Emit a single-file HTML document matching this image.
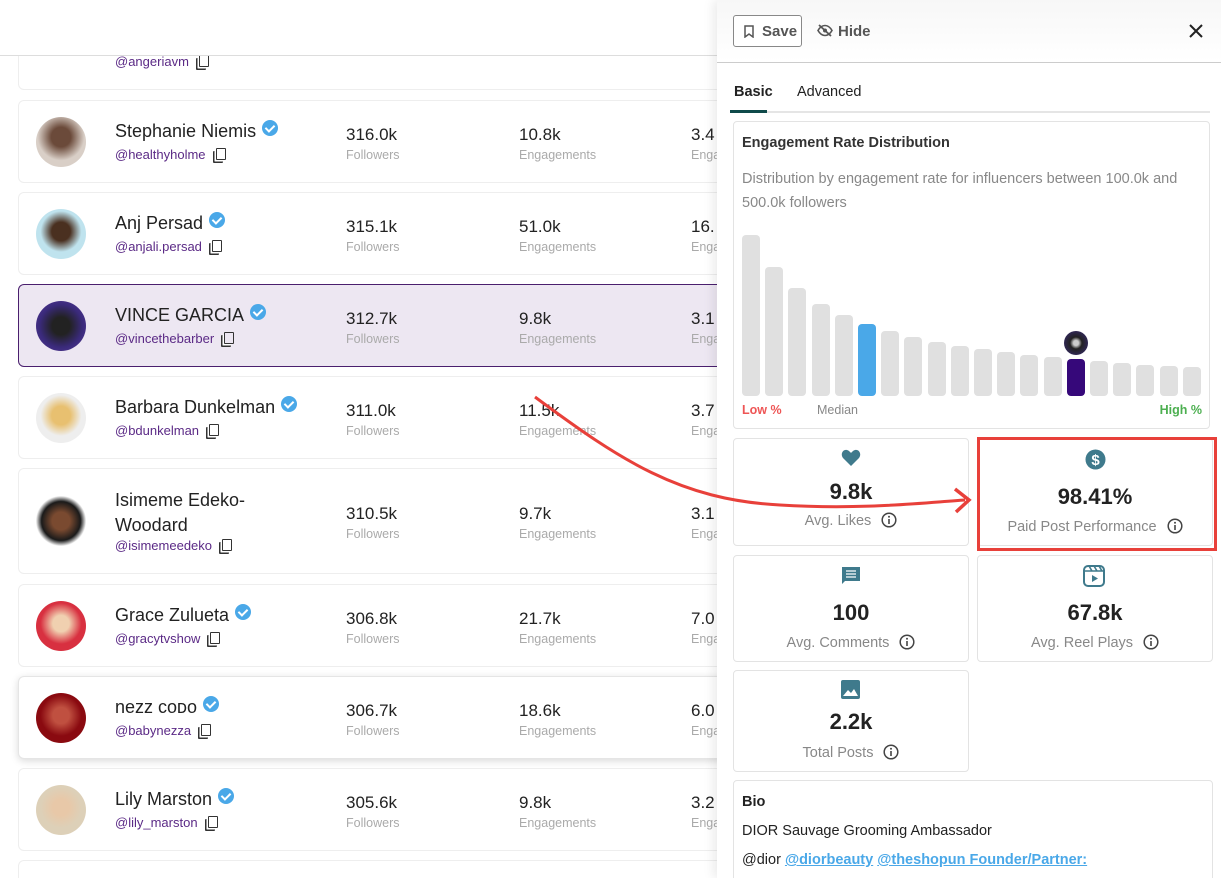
<!DOCTYPE html>
<html><head><meta charset="utf-8"><style>
*{box-sizing:border-box;margin:0;padding:0}
html,body{width:1221px;height:878px;overflow:hidden}
body{background:#fff;font-family:"Liberation Sans",sans-serif;position:relative}
.topbar{position:absolute;left:0;top:0;width:717px;height:56px;border-bottom:1px solid #ddd;background:#fff;z-index:2}
.card{position:absolute;left:18px;width:720px;height:83px;border:1px solid #eee;border-radius:6px;background:#fff}
.card.sel{background:#ede7f2;border-color:#4a1f6e}
.card.sh{box-shadow:0 2px 8px rgba(0,0,0,.15);border-color:#e5e5e5}
.av{position:absolute;left:17px;top:16px;width:50px;height:50px;border-radius:50%}
.nm{position:absolute;left:96px;top:19px;font-size:18px;color:#222}
.hd{position:absolute;left:96px;top:46px;font-size:13px;color:#5b2a86}
.v{position:absolute;top:24px;font-size:17px;color:#222}
.l{position:absolute;top:47px;font-size:12.5px;color:#aaa}
.chk{display:inline-block;width:16px;height:16px;border-radius:50%;background:#4aa8e8;vertical-align:1px;margin-left:6px;position:relative}
.chk:after{content:"";position:absolute;left:5px;top:3px;width:4px;height:7px;border:solid #fff;border-width:0 2px 2px 0;transform:rotate(45deg)}
.cp{display:inline-block;width:10px;height:12px;border:1.5px solid #333;border-radius:1px;margin-left:10px;vertical-align:-1px;box-shadow:-2px 2px 0 -0.5px #fff,-3px 3px 0 0 #333}
.panel{position:absolute;left:717px;top:0;width:504px;height:878px;background:#fff;box-shadow:-4px 0 10px rgba(0,0,0,.08);z-index:3}
.box{position:absolute;border:1px solid #e3e3e3;border-radius:4px;background:#fff}
.st{text-align:center}
.st .n{position:absolute;left:0;right:0;font-size:22px;font-weight:bold;color:#222}
.st .t{position:absolute;left:0;right:0;font-size:14.5px;color:#888}
.i{display:inline-block;width:16px;height:16px;margin-left:10px;vertical-align:-3px}
.bar{position:absolute;width:18px;background:#e0e0e0;border-radius:4px}
</style></head><body>
<svg width="0" height="0" style="position:absolute"><defs><symbol id="inf" viewBox="0 0 16 16"><circle cx="8" cy="8" r="6.8" fill="none" stroke="#444" stroke-width="1.5"/><circle cx="8" cy="4.8" r="1" fill="#444"/><path d="M8 7v5" stroke="#444" stroke-width="1.6"/></symbol></defs></svg>
<div class="topbar"></div>
<div class="card" style="top:-10px;height:100px"><div class="hd" style="top:63px">@angeriavm<span class="cp"></span></div></div>

<div class="card" style="top:100px"><div class="av" style="background:radial-gradient(circle at 50% 40%,#6b4a3a 25%,#d9cfc7 60%)"></div><div class="nm">Stephanie Niemis<span class="chk"></span></div><div class="hd">@healthyholme<span class="cp"></span></div><div class="v" style="left:327px">316.0k</div><div class="l" style="left:327px">Followers</div><div class="v" style="left:500px">10.8k</div><div class="l" style="left:500px">Engagements</div><div class="v" style="left:672px">3.4</div><div class="l" style="left:672px">Enga</div></div>

<div class="card" style="top:192px"><div class="av" style="background:radial-gradient(circle at 50% 45%,#4a3020 25%,#bfe3ee 55%)"></div><div class="nm">Anj Persad<span class="chk"></span></div><div class="hd">@anjali.persad<span class="cp"></span></div><div class="v" style="left:327px">315.1k</div><div class="l" style="left:327px">Followers</div><div class="v" style="left:500px">51.0k</div><div class="l" style="left:500px">Engagements</div><div class="v" style="left:672px">16.</div><div class="l" style="left:672px">Enga</div></div>

<div class="card sel" style="top:284px"><div class="av" style="background:radial-gradient(circle at 50% 50%,#222 25%,#3a2a7a 60%,#5a3aa0)"></div><div class="nm">VINCE GARCIA<span class="chk"></span></div><div class="hd">@vincethebarber<span class="cp"></span></div><div class="v" style="left:327px">312.7k</div><div class="l" style="left:327px">Followers</div><div class="v" style="left:500px">9.8k</div><div class="l" style="left:500px">Engagements</div><div class="v" style="left:672px">3.1</div><div class="l" style="left:672px">Enga</div></div>

<div class="card" style="top:376px"><div class="av" style="background:radial-gradient(circle at 50% 45%,#e8c070 25%,#eee 55%)"></div><div class="nm">Barbara Dunkelman<span class="chk"></span></div><div class="hd">@bdunkelman<span class="cp"></span></div><div class="v" style="left:327px">311.0k</div><div class="l" style="left:327px">Followers</div><div class="v" style="left:500px">11.5k</div><div class="l" style="left:500px">Engagements</div><div class="v" style="left:672px">3.7</div><div class="l" style="left:672px">Enga</div></div>

<div class="card" style="top:468px;height:106px"><div class="av" style="top:27px;background:radial-gradient(circle at 50% 50%,#7a4a30 25%,#1a1a1a 55%,#eee 70%)"></div><div class="nm" style="top:19px;line-height:25px">Isimeme Edeko-<br>Woodard</div><div class="hd" style="top:69px">@isimemeedeko<span class="cp"></span></div><div class="v" style="left:327px;top:35px">310.5k</div><div class="l" style="left:327px;top:58px">Followers</div><div class="v" style="left:500px;top:35px">9.7k</div><div class="l" style="left:500px;top:58px">Engagements</div><div class="v" style="left:672px;top:35px">3.1</div><div class="l" style="left:672px;top:58px">Enga</div></div>

<div class="card" style="top:584px"><div class="av" style="background:radial-gradient(circle at 50% 45%,#f0d0b0 22%,#d83040 55%)"></div><div class="nm">Grace Zulueta<span class="chk"></span></div><div class="hd">@gracytvshow<span class="cp"></span></div><div class="v" style="left:327px">306.8k</div><div class="l" style="left:327px">Followers</div><div class="v" style="left:500px">21.7k</div><div class="l" style="left:500px">Engagements</div><div class="v" style="left:672px">7.0</div><div class="l" style="left:672px">Enga</div></div>

<div class="card sh" style="top:676px"><div class="av" style="background:radial-gradient(circle at 50% 45%,#c05040 22%,#8a0a10 55%)"></div><div class="nm">nezz ᴄᴏᴅᴏ<span class="chk"></span></div><div class="hd">@babynezza<span class="cp"></span></div><div class="v" style="left:327px">306.7k</div><div class="l" style="left:327px">Followers</div><div class="v" style="left:500px">18.6k</div><div class="l" style="left:500px">Engagements</div><div class="v" style="left:672px">6.0</div><div class="l" style="left:672px">Enga</div></div>

<div class="card" style="top:768px"><div class="av" style="background:radial-gradient(circle at 50% 45%,#e8c8a8 22%,#ddd0b8 55%)"></div><div class="nm">Lily Marston<span class="chk"></span></div><div class="hd">@lily_marston<span class="cp"></span></div><div class="v" style="left:327px">305.6k</div><div class="l" style="left:327px">Followers</div><div class="v" style="left:500px">9.8k</div><div class="l" style="left:500px">Engagements</div><div class="v" style="left:672px">3.2</div><div class="l" style="left:672px">Enga</div></div>
<div class="card" style="top:860px;height:18px;border-bottom:none;border-radius:6px 6px 0 0"></div>

<div class="panel">
 <div style="position:absolute;left:0;top:0;width:504px;height:63px;border-bottom:1px solid #ccc;background:linear-gradient(#f7f7f7,#fff)"></div>
 <div style="position:absolute;left:16px;top:15px;width:69px;height:32px;border:1px solid #888;border-radius:3px;font-size:15px;font-weight:bold;color:#555;padding:7px 0 0 28px;background:#fff">Save
  <svg style="position:absolute;left:10px;top:9px" width="10" height="13" viewBox="0 0 10 13"><path d="M1 1h8v11l-4-3-4 3z" fill="none" stroke="#555" stroke-width="1.5"/></svg></div>
 <svg style="position:absolute;left:100px;top:24px" width="16" height="13" viewBox="0 0 16 13"><path d="M1 6.5C3 3 5.5 1.5 8 1.5s5 1.5 7 5c-2 3.5-4.5 5-7 5s-5-1.5-7-5z" fill="none" stroke="#555" stroke-width="1.6"/><circle cx="8" cy="6.5" r="2" fill="#555"/><path d="M2 1l12 11" stroke="#555" stroke-width="1.8"/></svg>
 <div style="position:absolute;left:121px;top:23px;font-size:15px;font-weight:bold;color:#555">Hide</div>
 <svg style="position:absolute;left:471px;top:23px" width="16" height="16"><path d="M2 2l12 12M14 2L2 14" stroke="#222" stroke-width="2"/></svg>
 <div style="position:absolute;left:17px;top:84px;font-size:14.5px;font-weight:bold;color:#222">Basic</div>
 <div style="position:absolute;left:80px;top:84px;font-size:14.5px;color:#222">Advanced</div>
 <div style="position:absolute;left:13px;top:111px;width:480px;height:2px;background:#e5e5e5"></div>
 <div style="position:absolute;left:13px;top:110px;width:37px;height:3px;background:#0f4a4a"></div>
 <div class="box" style="left:16px;top:121px;width:477px;height:308px">
  <div style="position:absolute;left:8px;top:13px;font-size:14.5px;font-weight:bold;color:#333">Engagement Rate Distribution</div>
  <div style="position:absolute;left:8px;top:45px;width:465px;font-size:14.5px;line-height:24px;color:#888">Distribution by engagement rate for influencers between 100.0k and 500.0k followers</div>
  <div style="position:absolute;left:8px;top:281px;font-size:12.5px;font-weight:bold;color:#e55">Low %</div>
  <div style="position:absolute;left:83px;top:281px;font-size:12.5px;color:#888">Median</div>
  <div style="position:absolute;right:7px;top:281px;font-size:12.5px;font-weight:bold;color:#4caf50">High %</div>
 </div>
 <div class="bar" style="left:25px;top:235px;height:161px"></div>
 <div class="bar" style="left:48px;top:267px;height:129px"></div>
 <div class="bar" style="left:71px;top:288px;height:108px"></div>
 <div class="bar" style="left:95px;top:304px;height:92px"></div>
 <div class="bar" style="left:118px;top:315px;height:81px"></div>
 <div class="bar" style="left:141px;top:324px;height:72px;background:#4aa8e8"></div>
 <div class="bar" style="left:164px;top:331px;height:65px"></div>
 <div class="bar" style="left:187px;top:337px;height:59px"></div>
 <div class="bar" style="left:211px;top:342px;height:54px"></div>
 <div class="bar" style="left:234px;top:346px;height:50px"></div>
 <div class="bar" style="left:257px;top:349px;height:47px"></div>
 <div class="bar" style="left:280px;top:352px;height:44px"></div>
 <div class="bar" style="left:303px;top:355px;height:41px"></div>
 <div class="bar" style="left:327px;top:357px;height:39px"></div>
 <div class="bar" style="left:350px;top:359px;height:37px;background:#36087a"></div>
 <div style="position:absolute;left:347px;top:331px;width:24px;height:24px;border-radius:50%;background:radial-gradient(#ccc 15%,#222 35%,#3a2a7a)"></div>
 <div class="bar" style="left:373px;top:361px;height:35px"></div>
 <div class="bar" style="left:396px;top:363px;height:33px"></div>
 <div class="bar" style="left:419px;top:365px;height:31px"></div>
 <div class="bar" style="left:443px;top:366px;height:30px"></div>
 <div class="bar" style="left:466px;top:367px;height:29px"></div>

 <div class="box st" style="left:16px;top:438px;width:236px;height:108px">
  <svg style="position:absolute;left:107px;top:10px" width="20" height="18" viewBox="0 0 20 18"><path d="M10 17L2 9C-1 5 2 0 6 1c2 .5 3 2 4 3 1-1 2-2.5 4-3 4-1 7 4 4 8z" fill="#3f7a8c"/></svg>
  <div class="n" style="top:40px">9.8k</div><div class="t" style="top:73px">Avg. Likes<svg class="i"><use href="#inf"/></svg></div></div>
 <div class="box st" style="left:260px;top:438px;width:236px;height:108px">
  <svg style="position:absolute;left:107px;top:10px" width="21" height="21" viewBox="0 0 21 21"><circle cx="10.5" cy="10.5" r="10" fill="#3f7a8c"/><text x="10.5" y="16" font-size="15" font-weight="bold" fill="#fff" text-anchor="middle" font-family="Liberation Sans">$</text></svg>
  <div class="n" style="top:45px">98.41%</div><div class="t" style="top:79px">Paid Post Performance<svg class="i"><use href="#inf"/></svg></div></div>
 <div style="position:absolute;left:260px;top:437px;width:240px;height:114px;border:3px solid #e8403a"></div>
 <div class="box st" style="left:16px;top:555px;width:236px;height:107px">
  <svg style="position:absolute;left:107px;top:10px" width="20" height="20" viewBox="0 0 20 20"><path d="M1 1h18v14H4l-3 3z" fill="#3f7a8c"/><path d="M5 5h10M5 8h10M5 11h10" stroke="#fff" stroke-width="1.3"/></svg>
  <div class="n" style="top:44px">100</div><div class="t" style="top:78px">Avg. Comments<svg class="i"><use href="#inf"/></svg></div></div>
 <div class="box st" style="left:260px;top:555px;width:236px;height:107px">
  <svg style="position:absolute;left:105px;top:9px" width="22" height="22" viewBox="0 0 22 22"><rect x="1" y="1" width="20" height="20" rx="4" fill="none" stroke="#3f7a8c" stroke-width="2"/><path d="M1 6h20M6 1l3 5M11 1l3 5M16 1l3 5" stroke="#3f7a8c" stroke-width="1.6"/><path d="M9 10v7l6-3.5z" fill="#3f7a8c"/></svg>
  <div class="n" style="top:44px">67.8k</div><div class="t" style="top:78px">Avg. Reel Plays<svg class="i"><use href="#inf"/></svg></div></div>
 <div class="box st" style="left:16px;top:670px;width:236px;height:102px">
  <svg style="position:absolute;left:107px;top:9px" width="19" height="19" viewBox="0 0 19 19"><rect width="19" height="19" rx="2" fill="#3f7a8c"/><path d="M2 16l5-6 3 3 3-4 4 7z" fill="#fff"/></svg>
  <div class="n" style="top:38px">2.2k</div><div class="t" style="top:73px">Total Posts<svg class="i"><use href="#inf"/></svg></div></div>
 <div class="box" style="left:16px;top:780px;width:480px;height:110px">
  <div style="position:absolute;left:8px;top:13px;font-size:14.5px;font-weight:bold;color:#222">Bio</div>
  <div style="position:absolute;left:8px;top:42px;font-size:14.5px;color:#222">DIOR Sauvage Grooming Ambassador</div>
  <div style="position:absolute;left:8px;top:71px;font-size:14.5px;color:#222">@dior <span style="color:#4aa8e8;font-weight:bold;text-decoration:underline">@diorbeauty</span> <span style="color:#4aa8e8;font-weight:bold;text-decoration:underline">@theshopun Founder/Partner:</span></div>
 </div>
</div>
<svg style="position:absolute;left:0;top:0;z-index:5" width="1221" height="878"><path d="M535 397C620 460 680 500 780 505 860 510 920 503 965 500" fill="none" stroke="#e8403a" stroke-width="3"/><path d="M955 489L969 500 956 512" fill="none" stroke="#e8403a" stroke-width="3.5"/></svg>
</body></html>
